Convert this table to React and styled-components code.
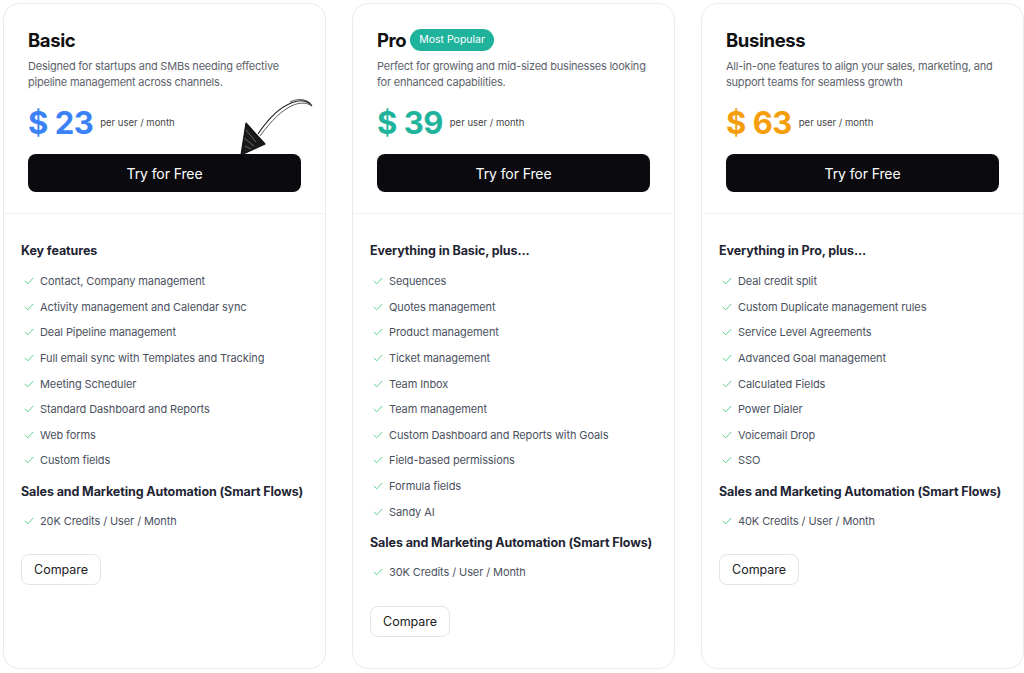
import styled, { createGlobalStyle } from 'styled-components';

const GlobalStyle = createGlobalStyle`
    * { box-sizing: border-box; }
    body {
        margin: 0;
        background: #ffffff;
        font-family: Inter, "Liberation Sans", sans-serif;
        overflow: hidden;
    }
`;

const plans = [
    {
        name: 'Basic',
        desc: 'Designed for startups and SMBs needing effective pipeline management across channels.',
        price: '23',
        color: '#3b82f6',
        heading: 'Key features',
        features: [
            'Contact, Company management',
            'Activity management and Calendar sync',
            'Deal Pipeline management',
            'Full email sync with Templates and Tracking',
            'Meeting Scheduler',
            'Standard Dashboard and Reports',
            'Web forms',
            'Custom fields',
        ],
        credits: '20K Credits / User / Month',
        arrow: true,
    },
    {
        name: 'Pro',
        badge: 'Most Popular',
        desc: 'Perfect for growing and mid-sized businesses looking for enhanced capabilities.',
        price: '39',
        color: '#1fb39c',
        heading: 'Everything in Basic, plus...',
        features: [
            'Sequences',
            'Quotes management',
            'Product management',
            'Ticket management',
            'Team Inbox',
            'Team management',
            'Custom Dashboard and Reports with Goals',
            'Field-based permissions',
            'Formula fields',
            'Sandy AI',
        ],
        credits: '30K Credits / User / Month',
    },
    {
        name: 'Business',
        desc: 'All-in-one features to align your sales, marketing, and support teams for seamless growth',
        price: '63',
        color: '#f59e0b',
        heading: 'Everything in Pro, plus...',
        features: [
            'Deal credit split',
            'Custom Duplicate management rules',
            'Service Level Agreements',
            'Advanced Goal management',
            'Calculated Fields',
            'Power Dialer',
            'Voicemail Drop',
            'SSO',
        ],
        credits: '40K Credits / User / Month',
    },
];

function Check() {
    return (
        <CheckIcon viewBox="0 0 10 8" width="10" height="8">
            <path d="M1 4.2 L3.8 6.8 L9 1.2" fill="none" stroke="#5fd38a" strokeWidth="1" strokeLinecap="round" strokeLinejoin="round" />
        </CheckIcon>
    );
}

function Arrow() {
    return (
        <ArrowMark viewBox="0 0 82 64" width="82" height="64">
            <path d="M80 12 C74 2 50 4 26 40" fill="none" stroke="#222" strokeWidth="1.1" />
            <path d="M80 12 C70 5 52 9 28 42" fill="none" stroke="#444" strokeWidth="0.9" />
            <path d="M78 9 C72 4 64 5 58 8" fill="none" stroke="#333" strokeWidth="0.8" />
            <polygon points="14,29 33,50 9,61" fill="#1a1a1a" stroke="#111" strokeWidth="1.2" strokeLinejoin="round" />
            <path d="M14 36 L24 48 M12 44 L22 52 M13 52 L19 55" stroke="#888" strokeWidth="0.7" />
        </ArrowMark>
    );
}

function PlanCard({ plan }) {
    return (
        <Card>
            <Top>
                <TitleRow>
                    <Title>{plan.name}</Title>
                    {plan.badge && <Badge>{plan.badge}</Badge>}
                </TitleRow>
                <Desc>{plan.desc}</Desc>
                <PriceRow>
                    <Price $color={plan.color}>$ {plan.price}</Price>
                    <Per>per user / month</Per>
                </PriceRow>
                <TryButton>Try for Free</TryButton>
                {plan.arrow && <Arrow />}
            </Top>
            <Bottom>
                <Heading>{plan.heading}</Heading>
                <List $top={8.5} $bottom={9.5}>
                    {plan.features.map(f => (
                        <Item key={f}>
                            <Check />
                            {f}
                        </Item>
                    ))}
                </List>
                <Heading>Sales and Marketing Automation (Smart Flows)</Heading>
                <List $top={7} $bottom={21}>
                    <Item>
                        <Check />
                        {plan.credits}
                    </Item>
                </List>
                <CompareButton>Compare</CompareButton>
            </Bottom>
        </Card>
    );
}

export default function App() {
    return (
        <>
            <GlobalStyle />
            <Page>
                {plans.map(p => (
                    <PlanCard key={p.name} plan={p} />
                ))}
            </Page>
        </>
    );
}

const Page = styled.div`
    display: flex;
    gap: 26px;
    padding: 3px 0 0 3px;
    width: 1024px;
`;
const Card = styled.div`
    width: 323px;
    height: 666px;
    flex-shrink: 0;
    border: 1px solid #ebebeb;
    border-radius: 16px;
    background: #fff;
    display: flex;
    flex-direction: column;
`;
const Top = styled.div`
    position: relative;
    padding: 23px 24px 21px 24px;
    border-bottom: 1px solid #f1f1f1;
`;
const TitleRow = styled.div`
    display: flex;
    align-items: center;
    gap: 4px;
    height: 26px;
`;
const Title = styled.h3`
    margin: 0;
    font-size: 18.5px;
    font-weight: 700;
    color: #111;
    letter-spacing: -0.4px;
`;
const Badge = styled.span`
    background: #1fb39c;
    color: #fff;
    font-size: 10.5px;
    height: 22px;
    line-height: 22px;
    padding: 0 9px;
    border-radius: 11px;
`;
const Desc = styled.p`
    margin: 5px 0 0;
    font-size: 11px;
    line-height: 16px;
    color: #5d626c;
    letter-spacing: -0.22px;
`;
const PriceRow = styled.div`
    display: flex;
    align-items: center;
    gap: 7px;
    margin-top: 14px;
    height: 36px;
`;
const Price = styled.span`
    font-size: 31px;
    font-weight: 700;
    color: ${props => props.$color};
    letter-spacing: -0.5px;
`;
const Per = styled.span`
    font-size: 9.5px;
    color: #444;
`;
const TryButton = styled.button`
    display: block;
    width: 100%;
    height: 38px;
    margin-top: 14px;
    border: none;
    border-radius: 8px;
    background: #0b0b0f;
    color: #fff;
    font-family: inherit;
    font-size: 14px;
    letter-spacing: -0.1px;
`;
const ArrowMark = styled.svg`
    position: absolute;
    left: 228px;
    top: 90px;
`;
const Bottom = styled.div`
    padding: 28px 17px 0 17px;
`;
const Heading = styled.h4`
    margin: 0;
    font-size: 12.5px;
    line-height: 18px;
    font-weight: 700;
    color: #1f2533;
    letter-spacing: -0.1px;
`;
const List = styled.ul`
    list-style: none;
    margin: ${props => props.$top}px 0 ${props => props.$bottom}px;
    padding: 0;
`;
const Item = styled.li`
    display: flex;
    align-items: center;
    height: 25.6px;
    font-size: 11px;
    color: #4b5160;
    letter-spacing: -0.1px;
`;
const CheckIcon = styled.svg`
    margin: 0 6px 0 3px;
    flex-shrink: 0;
`;
const CompareButton = styled.button`
    height: 31px;
    padding: 0 12px;
    border: 1.5px solid #e4e4e8;
    border-radius: 8px;
    background: #fff;
    font-family: inherit;
    font-size: 12.5px;
    color: #222;
`;
